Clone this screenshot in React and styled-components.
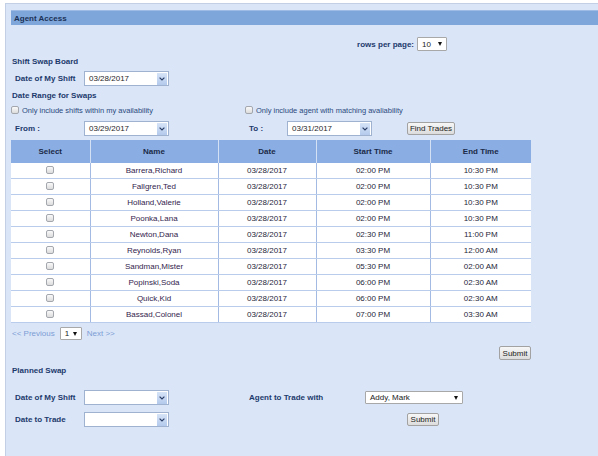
import React from "react"
import styled, { createGlobalStyle } from "styled-components"

const GlobalStyle = createGlobalStyle`
  html, body {
    margin: 0;
    padding: 0;
    background: #ffffff;
    font-family: "Liberation Sans", Arial, sans-serif;
    font-size: 8px;
    overflow: hidden;
  }
`

const Panel = styled.div`
  margin: 3px 0 0 5px;
  min-height: 460px;
  background: #dae5f8;
  border-left: 1px solid #c3cfe4;
  border-top: 1px solid #c3cfe4;
  padding: 6px 0 0 5px;
  box-sizing: border-box;
`

const HeaderBar = styled.div`
  height: 15px;
  line-height: 15px;
  background: #7ea6da;
  border-top: 1px solid #9dbbe5;
  box-sizing: border-box;
  padding-left: 3px;
  font-weight: bold;
  color: #1b3157;
`

const RowsLine = styled.div`
  width: 436px;
  height: 14px;
  margin-top: 12px;
  display: flex;
  justify-content: flex-end;
  align-items: center;
  gap: 3px;
`

const Label = styled.span`
  font-weight: bold;
  color: #1d3a6c;
  white-space: nowrap;
`

const Title = styled.div`
  height: 12px;
  line-height: 12px;
  margin-top: ${({ $top }) => $top}px;
  font-weight: bold;
  color: #1d3a6c;
  padding-left: 1px;
`

const FormRow = styled.div`
  display: flex;
  align-items: center;
  height: ${({ $h }) => $h || 15}px;
  margin-top: ${({ $top }) => $top}px;
`

const Cell = styled.div`
  width: ${({ $w }) => $w}px;
  flex: none;
  padding-left: ${({ $pad }) => $pad || 0}px;
  box-sizing: border-box;
  display: flex;
  align-items: center;
`

const CheckText = styled.span`
  color: #2a4a7c;
  font-size: 7.5px;
  margin-left: 3px;
  white-space: nowrap;
`

const Check = styled.input.attrs({ type: "checkbox" })`
  appearance: none;
  margin: 0;
  width: 8px;
  height: 8px;
  border: 1px solid #a4a8ae;
  border-radius: 2px;
  background: linear-gradient(#fafafa, #dcdcdc);
  box-sizing: border-box;
`

const DateBox = styled.div`
  width: 85px;
  height: 15px;
  box-sizing: border-box;
  border: 1px solid #9fb2cf;
  background: #fff;
  display: flex;
  align-items: center;
  justify-content: space-between;
  padding: 0 1px 0 4px;
  color: #1f1f2a;
`

const ArrowBtn = styled.span`
  width: 10px;
  height: 12px;
  background: linear-gradient(#d6e3f7, #b4caec);
  display: flex;
  align-items: center;
  justify-content: center;
`

const NativeBox = styled.div`
  width: ${({ $w }) => $w}px;
  height: ${({ $h }) => $h || 14}px;
  box-sizing: border-box;
  border: 1px solid #a8a8a8;
  border-radius: 1px;
  background: #fff;
  display: flex;
  align-items: center;
  justify-content: space-between;
  padding: 0 4px 0 4px;
  color: #1a1a1a;
`

const Tri = styled.span`
  width: 0;
  height: 0;
  border-left: 2.5px solid transparent;
  border-right: 2.5px solid transparent;
  border-top: 4px solid #111;
`

const Button = styled.button`
  font-family: inherit;
  font-size: 8px;
  color: #222;
  height: ${({ $h }) => $h || 14}px;
  width: ${({ $w }) => $w}px;
  padding: 0;
  border: 1px solid #a2a2a2;
  border-radius: 2px;
  background: linear-gradient(#f7f7f7, #dcdcdc);
  box-sizing: border-box;
`

const Table = styled.table`
  width: 520px;
  margin-top: 4px;
  border-collapse: collapse;
  table-layout: fixed;
  background: #fff;
`

const Th = styled.th`
  height: 23px;
  padding: 0;
  background: #8aaee3;
  color: #1b2a48;
  font-weight: bold;
  border-right: 1px solid #d4e1f5;
  &:last-child { border-right: none; }
`

const Td = styled.td`
  height: 15px;
  padding: 0;
  text-align: center;
  color: ${({ $name }) => ($name ? "#33244d" : "#26263a")};
  border-bottom: 1px solid #b9cceb;
  border-right: 1px solid #a3bbe2;
  &:last-child { border-right: none; }
`

const Pager = styled.div`
  display: flex;
  align-items: center;
  height: 13px;
  margin-top: 4px;
  padding-left: 1px;
  gap: 5px;
  color: #7c9dd4;
`

const SubmitLine = styled.div`
  width: 520px;
  height: 14px;
  margin-top: 6px;
  display: flex;
  justify-content: flex-end;
`

const Chevron = () => (
  <svg width="6" height="4" viewBox="0 0 6 4">
    <path d="M0.6 0.6 L3 3 L5.4 0.6" fill="none" stroke="#2b3f66" strokeWidth="1.2" />
  </svg>
)

const DateSelect = ({ value }) => (
  <DateBox>
    <span>{value}</span>
    <ArrowBtn>
      <Chevron />
    </ArrowBtn>
  </DateBox>
)

const rows = [
  ["Barrera,Richard", "02:00 PM", "10:30 PM"],
  ["Fallgren,Ted", "02:00 PM", "10:30 PM"],
  ["Holland,Valerie", "02:00 PM", "10:30 PM"],
  ["Poonka,Lana", "02:00 PM", "10:30 PM"],
  ["Newton,Dana", "02:30 PM", "11:00 PM"],
  ["Reynolds,Ryan", "03:30 PM", "12:00 AM"],
  ["Sandman,Mister", "05:30 PM", "02:00 AM"],
  ["Popinski,Soda", "06:00 PM", "02:30 AM"],
  ["Quick,Kid", "06:00 PM", "02:30 AM"],
  ["Bassad,Colonel", "07:00 PM", "03:30 AM"],
]

export default function App() {
  return (
    <>
      <GlobalStyle />
      <Panel>
        <HeaderBar>Agent Access</HeaderBar>

        <RowsLine>
          <Label>rows per page:</Label>
          <NativeBox $w={30}>
            <span>10</span>
            <Tri />
          </NativeBox>
        </RowsLine>

        <Title $top={5}>Shift Swap Board</Title>
        <FormRow $top={3}>
          <Cell $w={73} $pad={4}>
            <Label>Date of My Shift</Label>
          </Cell>
          <DateSelect value="03/28/2017" />
        </FormRow>

        <Title $top={4}>Date Range for Swaps</Title>
        <FormRow $top={2} $h={12}>
          <Cell $w={234}>
            <Check />
            <CheckText>Only include shifts within my availability</CheckText>
          </Cell>
          <Cell $w={200}>
            <Check />
            <CheckText>Only include agent with matching avaliability</CheckText>
          </Cell>
        </FormRow>

        <FormRow $top={5}>
          <Cell $w={73} $pad={4}>
            <Label>From :</Label>
          </Cell>
          <Cell $w={165}>
            <DateSelect value="03/29/2017" />
          </Cell>
          <Cell $w={38}>
            <Label>To :</Label>
          </Cell>
          <Cell $w={120}>
            <DateSelect value="03/31/2017" />
          </Cell>
          <Button $w={48} $h={13}>Find Trades</Button>
        </FormRow>

        <Table>
          <colgroup>
            <col style={{ width: 79 }} />
            <col style={{ width: 128 }} />
            <col style={{ width: 98 }} />
            <col style={{ width: 114 }} />
            <col style={{ width: 101 }} />
          </colgroup>
          <thead>
            <tr>
              <Th>Select</Th>
              <Th>Name</Th>
              <Th>Date</Th>
              <Th>Start Time</Th>
              <Th>End Time</Th>
            </tr>
          </thead>
          <tbody>
            {rows.map(([name, start, end]) => (
              <tr key={name}>
                <Td>
                  <Check />
                </Td>
                <Td $name>{name}</Td>
                <Td>03/28/2017</Td>
                <Td>{start}</Td>
                <Td>{end}</Td>
              </tr>
            ))}
          </tbody>
        </Table>

        <Pager>
          <span>&lt;&lt; Previous</span>
          <NativeBox $w={22} $h={13}>
            <span>1</span>
            <Tri />
          </NativeBox>
          <span>Next &gt;&gt;</span>
        </Pager>

        <SubmitLine>
          <Button $w={32}>Submit</Button>
        </SubmitLine>

        <Title $top={5}>Planned Swap</Title>
        <FormRow $top={13}>
          <Cell $w={73} $pad={4}>
            <Label>Date of My Shift</Label>
          </Cell>
          <Cell $w={165}>
            <DateSelect value="" />
          </Cell>
          <Cell $w={116}>
            <Label>Agent to Trade with</Label>
          </Cell>
          <NativeBox $w={98} $h={13}>
            <span>Addy, Mark</span>
            <Tri />
          </NativeBox>
        </FormRow>
        <FormRow $top={7}>
          <Cell $w={73} $pad={4}>
            <Label>Date to Trade</Label>
          </Cell>
          <Cell $w={323}>
            <DateSelect value="" />
          </Cell>
          <Button $w={32} $h={13}>Submit</Button>
        </FormRow>
      </Panel>
    </>
  )
}
